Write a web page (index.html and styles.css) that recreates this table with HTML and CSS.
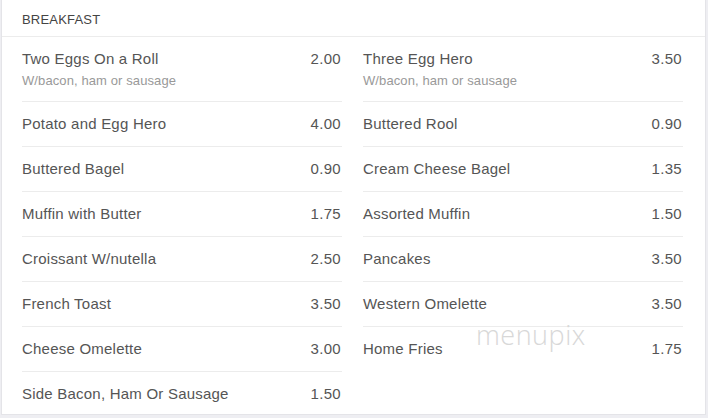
FILE: index.html
```html
<!DOCTYPE html>
<html>
<head>
<meta charset="utf-8">
<link rel="stylesheet" href="styles.css">
</head>
<body>
<div class="card">
  <div class="card-header">BREAKFAST</div>
  <div class="columns">
    <ul class="menu-list">
      <li class="item"><div class="item-main"><span class="name">Two Eggs On a Roll</span><span class="price">2.00</span></div><div class="desc">W/bacon, ham or sausage</div></li>
      <li class="item"><div class="item-main"><span class="name">Potato and Egg Hero</span><span class="price">4.00</span></div></li>
      <li class="item"><div class="item-main"><span class="name">Buttered Bagel</span><span class="price">0.90</span></div></li>
      <li class="item"><div class="item-main"><span class="name">Muffin with Butter</span><span class="price">1.75</span></div></li>
      <li class="item"><div class="item-main"><span class="name">Croissant W/nutella</span><span class="price">2.50</span></div></li>
      <li class="item"><div class="item-main"><span class="name">French Toast</span><span class="price">3.50</span></div></li>
      <li class="item"><div class="item-main"><span class="name">Cheese Omelette</span><span class="price">3.00</span></div></li>
      <li class="item"><div class="item-main"><span class="name">Side Bacon, Ham Or Sausage</span><span class="price">1.50</span></div></li>
    </ul>
    <ul class="menu-list">
      <li class="item"><div class="item-main"><span class="name">Three Egg Hero</span><span class="price">3.50</span></div><div class="desc">W/bacon, ham or sausage</div></li>
      <li class="item"><div class="item-main"><span class="name">Buttered Rool</span><span class="price">0.90</span></div></li>
      <li class="item"><div class="item-main"><span class="name">Cream Cheese Bagel</span><span class="price">1.35</span></div></li>
      <li class="item"><div class="item-main"><span class="name">Assorted Muffin</span><span class="price">1.50</span></div></li>
      <li class="item"><div class="item-main"><span class="name">Pancakes</span><span class="price">3.50</span></div></li>
      <li class="item"><div class="item-main"><span class="name">Western Omelette</span><span class="price">3.50</span></div></li>
      <li class="item"><div class="item-main"><span class="name">Home Fries</span><span class="price">1.75</span></div></li>
    </ul>
  </div>
  <div class="watermark">menupix</div>
</div>
</body>
</html>
```
FILE: styles.css
```css
html, body {
  margin: 0;
  padding: 0;
}
body {
  background: #eeeef2;
  font-family: "Liberation Sans", Arial, sans-serif;
  color: #555;
  padding: 0 2px 2px 1px;
  height: 418px;
  box-sizing: border-box;
  overflow: hidden;
}
.card {
  position: relative;
  background: #fff;
  border: 1px solid #e4e4e8;
  border-top: 0;
  height: 415px;
  box-sizing: border-box;
}
.card-header {
  font-size: 13px;
  line-height: 15px;
  letter-spacing: 0.2px;
  color: #444;
  padding: 12px 20px 9px;
  border-bottom: 1px solid #ececec;
}
.columns {
  display: grid;
  grid-template-columns: 320px 320px;
  column-gap: 21px;
  padding: 0 22px 0 20px;
}
.menu-list {
  list-style: none;
  margin: 0;
  padding: 0;
}
.item {
  padding: 13px 0;
  border-bottom: 1px solid #ececec;
}
.item:first-child {
  padding-bottom: 12px;
}
.item:last-child {
  border-bottom: 0;
}
.item-main {
  display: flex;
  justify-content: space-between;
  font-size: 15px;
  line-height: 18px;
  letter-spacing: 0.22px;
  color: #555;
}
.price {
  padding-right: 1px;
  letter-spacing: 0.3px;
}
.desc {
  margin-top: 5px;
  font-size: 13px;
  line-height: 16px;
  letter-spacing: 0.1px;
  color: #999;
}
.watermark {
  position: absolute;
  left: 474px;
  top: 316px;
  font-family: "Open Sans", sans-serif;
  font-weight: 300;
  font-size: 27px;
  letter-spacing: 0.5px;
  color: #d8d8d8;
  pointer-events: none;
}
```
